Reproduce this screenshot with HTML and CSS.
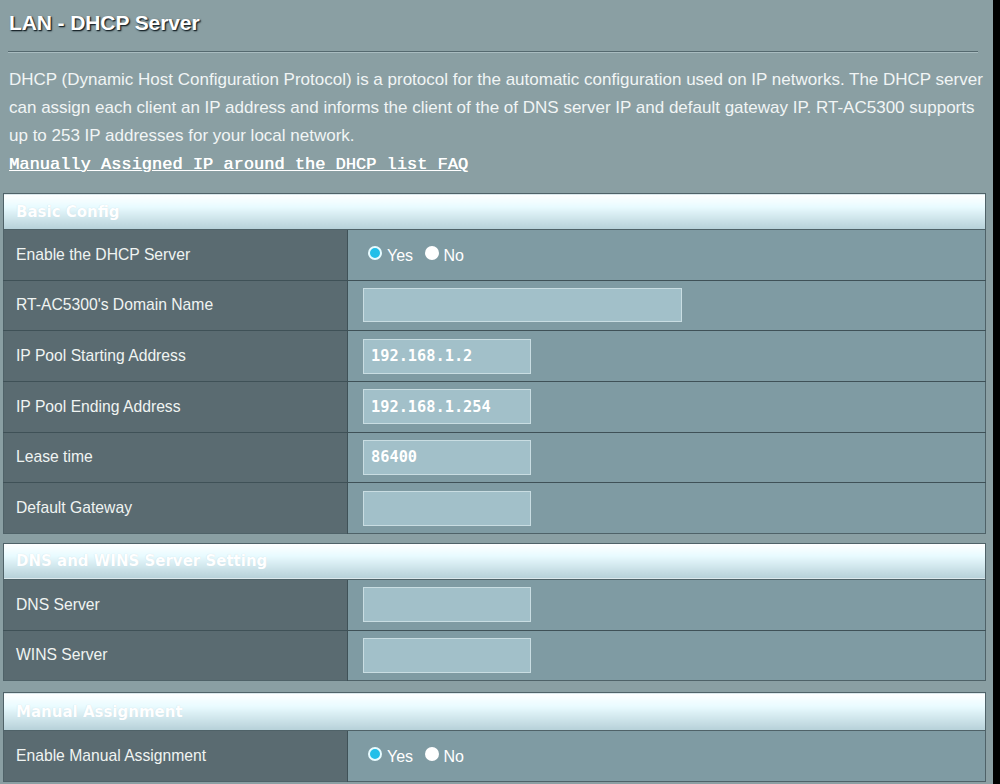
FILE: index.html
```html
<!DOCTYPE html>
<html>
<head>
<meta charset="utf-8">
<title>LAN - DHCP Server</title>
<link rel="stylesheet" href="styles.css">
</head>
<body>
<div class="page">
  <h1 class="title">LAN - DHCP Server</h1>
  <div class="divider"></div>
  <p class="desc">DHCP (Dynamic Host Configuration Protocol) is a protocol for the automatic configuration used on IP networks. The DHCP server can assign each client an IP address and informs the client of the of DNS server IP and default gateway IP. RT-AC5300 supports up to 253 IP addresses for your local network.<br><a class="faq" href="#">Manually Assigned IP around the DHCP list FAQ</a></p>

  <table class="form">
    <thead><tr><th colspan="2" class="head">Basic Config</th></tr></thead>
    <tbody>
      <tr><th>Enable the DHCP Server</th><td>
        <label class="radio"><input type="radio" name="dhcp" checked>Yes</label>
        <label class="radio"><input type="radio" name="dhcp">No</label>
      </td></tr>
      <tr><th>RT-AC5300's Domain Name</th><td><input class="field wide" type="text" value=""></td></tr>
      <tr><th>IP Pool Starting Address</th><td><input class="field" type="text" value="192.168.1.2"></td></tr>
      <tr><th>IP Pool Ending Address</th><td><input class="field" type="text" value="192.168.1.254"></td></tr>
      <tr><th>Lease time</th><td><input class="field" type="text" value="86400"></td></tr>
      <tr><th>Default Gateway</th><td><input class="field" type="text" value=""></td></tr>
    </tbody>
  </table>

  <table class="form">
    <thead><tr><th colspan="2" class="head">DNS and WINS Server Setting</th></tr></thead>
    <tbody>
      <tr><th>DNS Server</th><td><input class="field" type="text" value=""></td></tr>
      <tr><th>WINS Server</th><td><input class="field" type="text" value=""></td></tr>
    </tbody>
  </table>

  <table class="form last">
    <thead><tr><th colspan="2" class="head">Manual Assignment</th></tr></thead>
    <tbody>
      <tr><th>Enable Manual Assignment</th><td>
        <label class="radio"><input type="radio" name="manual" checked>Yes</label>
        <label class="radio"><input type="radio" name="manual">No</label>
      </td></tr>
    </tbody>
  </table>
</div>
</body>
</html>
```
FILE: styles.css
```css
html {
  background: #000;
  margin: 0;
}
body {
  margin: 0;
  font-family: "Liberation Sans", Arial, sans-serif;
}
.page {
  width: 993px;
  min-height: 784px;
  background: #8a9fa3;
  overflow: hidden;
}
.title {
  margin: 0;
  padding: 10px 0 0 9px;
  font-size: 21px;
  line-height: 26px;
  font-weight: bold;
  color: #ffffff;
  text-shadow: 1px 1px 1px #18242a, 1px 1px 2px #2a383d;
  letter-spacing: -0.1px;
}
.divider {
  margin: 15px 15px 0 8px;
  height: 1px;
  background: #55696f;
  border-bottom: 1px solid #a9bcc0;
}
.desc {
  margin: 13px 3px 0 9px;
  font-size: 17px;
  line-height: 28px;
  color: #f1f5f5;
}
.faq {
  font-family: "Liberation Mono", "Courier New", monospace;
  font-size: 17px;
  font-weight: normal;
  color: #ffffff;
  text-shadow: 0.4px 0 0 #ffffff;
  text-decoration: underline;
}
.form {
  margin: 14px 0 0 3px;
  width: 983px;
  border-collapse: collapse;
  border: 1px solid #4f6268;
}
.form + .form {
  margin-top: 9px;
}
.form.last {
  margin-top: 11px;
}
.form .head {
  height: 35px;
  padding: 0 0 0 12px;
  text-align: left;
  font-family: "DejaVu Sans", Verdana, sans-serif;
  font-size: 15px;
  font-weight: bold;
  color: #ffffff;
  text-shadow: 0 0 1px #c6dbe2;
  background: linear-gradient(to bottom, #ffffff 0%, #e9fbff 35%, #b6d0d8 100%);
  border-bottom: 1px solid #4f6268;
}
.form.last .head {
  height: 37px;
}
.form tbody th {
  width: 331px;
  height: 49.67px;
  padding: 0 0 0 12px;
  text-align: left;
  font-size: 15.7px;
  font-weight: normal;
  color: #f0f4f2;
  background: #5a6b71;
  border-top: 1px solid #3f5157;
  border-right: 1px solid #3f5157;
}
.form tbody td {
  padding: 0 0 0 15px;
  background: #7f9ba3;
  border-top: 1px solid #3f5157;
  color: #ffffff;
  font-size: 16px;
}
.form tbody tr:first-child th,
.form tbody tr:first-child td {
  border-top: none;
}
.field {
  box-sizing: border-box;
  width: 168px;
  height: 35px;
  margin: 0;
  padding: 0 0 0 7px;
  background: #a2c0c9;
  border: 1px solid #c9dde2;
  font-family: "DejaVu Sans Mono", monospace;
  font-size: 15.3px;
  font-weight: bold;
  color: #ffffff;
  outline: none;
}
.field.wide {
  width: 319px;
  height: 34px;
}
.radio {
  display: inline-flex;
  align-items: center;
  margin-right: 2px;
  padding-left: 5px;
  position: relative;
  top: 2px;
}
.radio input {
  appearance: none;
  -webkit-appearance: none;
  width: 14px;
  height: 14px;
  margin: 0 5px 0 0;
  border-radius: 50%;
  background: #ffffff;
  position: relative;
  top: -3px;
}
.radio input:checked {
  background: #22bfe9;
  border: 2px solid #e7fbff;
  box-sizing: border-box;
}
```
